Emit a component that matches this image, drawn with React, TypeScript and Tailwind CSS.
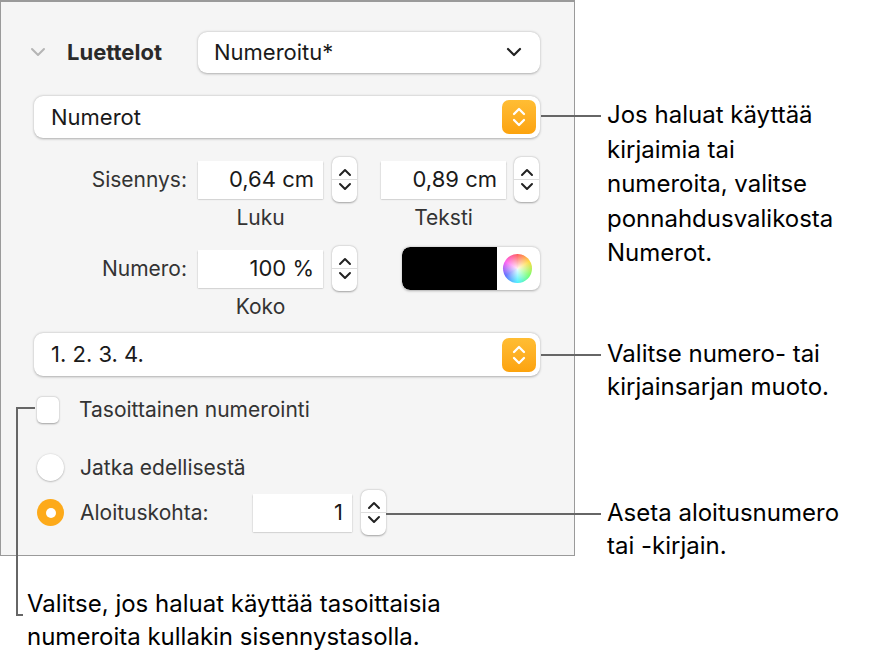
import React from "react";

const font = { fontFamily: "Inter, Roboto, 'Noto Sans', sans-serif" };

function Stepper() {
  return (
    <div className="w-[25px] h-[45px] rounded-[7px] bg-white shadow-[0_0.5px_2px_rgba(0,0,0,0.35)] flex flex-col items-center justify-center">
      <svg width="14" height="10" viewBox="0 0 14 10"><path d="M2 8 L7 3 L12 8" fill="none" stroke="#222" strokeWidth="2" strokeLinecap="round" strokeLinejoin="round" /></svg>
      <div className="h-[1px] w-full bg-[#ddd] my-[2px]" />
      <svg width="14" height="10" viewBox="0 0 14 10"><path d="M2 2 L7 7 L12 2" fill="none" stroke="#222" strokeWidth="2" strokeLinecap="round" strokeLinejoin="round" /></svg>
    </div>
  );
}

function Field({ w, children }: { w: number; children: React.ReactNode }) {
  return (
    <div className="h-[38px] bg-white shadow-[0_0.5px_1.5px_rgba(0,0,0,0.35)] flex items-center justify-end pr-[9px] text-[22px] text-[#1a1a1a]" style={{ width: w }}>
      {children}
    </div>
  );
}

function OrangeBtn() {
  return (
    <div className="w-[34px] h-[34px] rounded-[7px] bg-gradient-to-b from-[#ffbd33] to-[#fca30c] flex flex-col items-center justify-center">
      <svg width="16" height="24" viewBox="0 0 16 24"><path d="M3 9 L8 4 L13 9 M3 15 L8 20 L13 15" fill="none" stroke="white" strokeWidth="2.3" strokeLinecap="round" strokeLinejoin="round" /></svg>
    </div>
  );
}

function Popup({ text, h }: { text: string; h: number }) {
  return (
    <div className="w-[506px] ml-[33px] rounded-[9px] bg-white shadow-[0_0.5px_2.5px_rgba(0,0,0,0.3)] flex items-center justify-between pl-[17px] pr-[4px] text-[22px] text-[#1a1a1a]" style={{ height: h }}>
      <span>{text}</span>
      <OrangeBtn />
    </div>
  );
}

export default function App() {
  return (
    <div className="relative w-[886px] h-[662px] bg-white overflow-hidden" style={font}>
      <div className="absolute left-0 top-0 w-[575px] h-[556px] bg-[#f5f5f5] border border-[#9a9a9a] border-t-[2px]">
        <div className="flex items-center mt-[29px] h-[42px]">
          <svg className="ml-[29px]" width="16" height="10" viewBox="0 0 16 10"><path d="M2 2 L8 8 L14 2" fill="none" stroke="#b5b5b5" strokeWidth="2" strokeLinecap="round" strokeLinejoin="round" /></svg>
          <span className="ml-[21px] w-[131px] text-[22px] font-bold text-[#2a2a2a]">Luettelot</span>
          <div className="w-[342px] h-[41px] rounded-[9px] bg-white shadow-[0_0.5px_2.5px_rgba(0,0,0,0.3)] flex items-center justify-between pl-[16px] pr-[18px] text-[22px] text-[#1a1a1a]">
            <span>Numeroitu*</span>
            <svg width="16" height="10" viewBox="0 0 16 10"><path d="M2 2 L8 8 L14 2" fill="none" stroke="#222" strokeWidth="2.2" strokeLinecap="round" strokeLinejoin="round" /></svg>
          </div>
        </div>
        <div className="mt-[23px]"><Popup text="Numerot" h={42} /></div>
        <div className="flex items-center mt-[19px] h-[45px]">
          <span className="w-[186px] text-right text-[21px] text-[#333]">Sisennys:</span>
          <div className="ml-[11px]"><Field w={125}>0,64 cm</Field></div>
          <div className="ml-[9px]"><Stepper /></div>
          <div className="ml-[24px]"><Field w={125}>0,89 cm</Field></div>
          <div className="ml-[8px]"><Stepper /></div>
        </div>
        <div className="flex items-center text-[21px] text-[#333] h-[32px]">
          <span className="ml-[197px] w-[125px] text-center">Luku</span>
          <span className="ml-[58px] w-[125px] text-center">Teksti</span>
        </div>
        <div className="flex items-center mt-[12px] h-[45px]">
          <span className="w-[186px] text-right text-[21px] text-[#333]">Numero:</span>
          <div className="ml-[11px]"><Field w={125}>100 %</Field></div>
          <div className="ml-[9px]"><Stepper /></div>
          <div className="ml-[45px] w-[138px] h-[43px] rounded-[8px] bg-white shadow-[0_0.5px_2.5px_rgba(0,0,0,0.3)] flex items-center overflow-hidden">
            <div className="w-[95px] h-full bg-black rounded-l-[8px]" />
            <div className="w-[29px] h-[29px] ml-[6px] rounded-full" style={{ background: "conic-gradient(#ff5b5b, #ffd93b, #74ff6b, #4bf0ff, #5b6bff, #ff5bf0, #ff5b5b)" }}>
              <div className="w-full h-full rounded-full bg-[radial-gradient(circle,rgba(255,255,255,0.9),rgba(255,255,255,0)_70%)]" />
            </div>
          </div>
        </div>
        <div className="flex items-center h-[32px] text-[21px] text-[#333]">
          <span className="ml-[197px] w-[125px] text-center">Koko</span>
        </div>
        <div className="mt-[10px]"><Popup text="1. 2. 3. 4." h={43} /></div>
        <div className="flex items-center mt-[21px] h-[26px]">
          <div className="ml-[36px] w-[22px] h-[26px] rounded-[5px] bg-white shadow-[0_0.5px_2px_rgba(0,0,0,0.35)]" />
          <span className="ml-[20px] text-[21px] text-[#333]">Tasoittainen numerointi</span>
        </div>
        <div className="flex items-center mt-[31px] h-[27px]">
          <div className="ml-[36px] w-[27px] h-[27px] rounded-full bg-white shadow-[0_0.5px_2px_rgba(0,0,0,0.35)]" />
          <span className="ml-[16px] text-[21px] text-[#333]">Jatka edellisestä</span>
        </div>
        <div className="flex items-center mt-[9px] h-[45px]">
          <div className="ml-[36px] w-[27px] h-[27px] rounded-full bg-[#fdaa1a] flex items-center justify-center">
            <div className="w-[10px] h-[10px] rounded-full bg-white" />
          </div>
          <span className="ml-[16px] w-[173px] text-[21px] text-[#333]">Aloituskohta:</span>
          <Field w={99}>1</Field>
          <div className="ml-[9px]"><Stepper /></div>
        </div>
      </div>

      <div className="absolute left-[541px] top-[115px] w-[60px] h-[2px] bg-[#666]" />
      <div className="absolute left-[541px] top-[354px] w-[60px] h-[2px] bg-[#666]" />
      <div className="absolute left-[386px] top-[513px] w-[215px] h-[2px] bg-[#666]" />
      <div className="absolute left-[16px] top-[407px] w-[2px] h-[209px] bg-[#666]" />
      <div className="absolute left-[16px] top-[407px] w-[19px] h-[2px] bg-[#666]" />
      <div className="absolute left-[16px] top-[614px] w-[7px] h-[2px] bg-[#666]" />

      <div className="absolute left-[607px] top-[98px] text-[24px] leading-[34.5px] text-black">
        Jos haluat käyttää<br />kirjaimia tai<br />numeroita, valitse<br />ponnahdusvalikosta<br />Numerot.
      </div>
      <div className="absolute left-[607px] top-[337px] text-[24px] leading-[33px] text-black">
        Valitse numero- tai<br />kirjainsarjan muoto.
      </div>
      <div className="absolute left-[607px] top-[496px] text-[24px] leading-[33px] text-black">
        Aseta aloitusnumero<br />tai -kirjain.
      </div>
      <div className="absolute left-[27px] top-[587px] text-[24px] leading-[33px] text-black">
        Valitse, jos haluat käyttää tasoittaisia<br />numeroita kullakin sisennystasolla.
      </div>
    </div>
  );
}
